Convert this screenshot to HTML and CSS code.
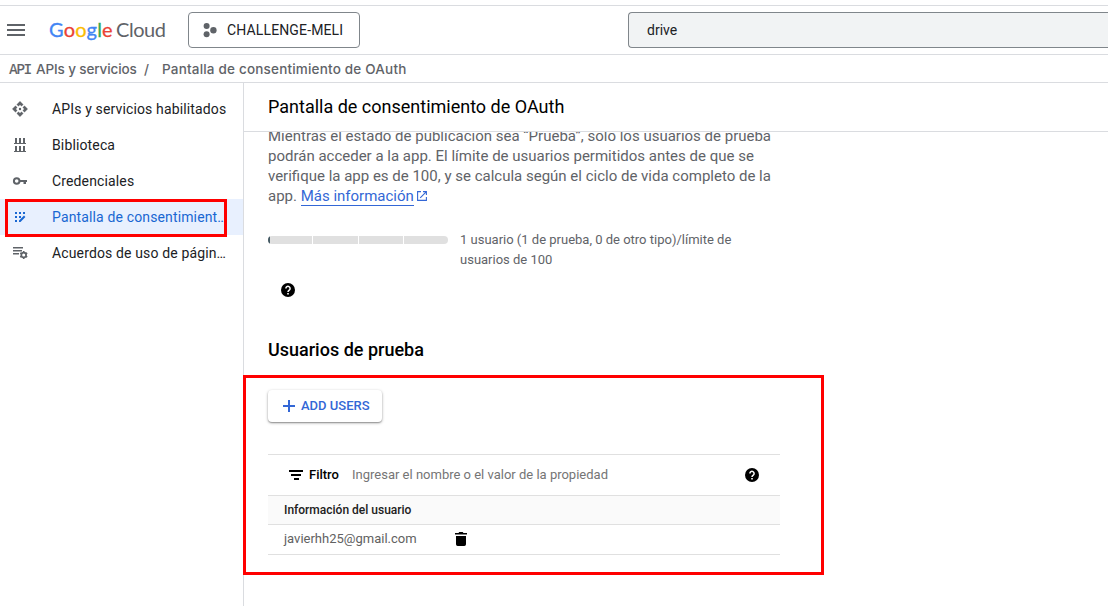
FILE: index.html
```html
<!DOCTYPE html>
<html lang="es">
<head>
<meta charset="utf-8">
<title>Pantalla de consentimiento de OAuth</title>
<link rel="stylesheet" href="styles.css">
</head>
<body>
<header class="topbar">
  <svg class="menu" width="18" height="12" viewBox="0 0 18 12"><path d="M0 0h18v2H0zM0 5h18v2H0zM0 10h18v2H0z" fill="#5f6368"/></svg>
  <div class="logo"><span class="google"><i class="b">G</i><i class="r">o</i><i class="y">o</i><i class="b">g</i><i class="g">l</i><i class="r">e</i></span><span class="cloud">Cloud</span></div>
  <button class="project">
    <svg width="14" height="15" viewBox="0 0 14 15" fill="#5f6368"><circle cx="3.6" cy="3.1" r="3"/><circle cx="10.4" cy="7.2" r="3.2"/><circle cx="3.6" cy="11.3" r="3"/></svg>
    <span>CHALLENGE-MELI</span>
  </button>
  <div class="search">drive</div>
</header>
<nav class="crumbs"><span class="api">API</span><span class="crumb one">APIs y servicios</span><span class="slash">/</span><span class="crumb two">Pantalla de consentimiento de OAuth</span></nav>
<div class="layout">
  <aside class="side">
    <a class="item"><svg width="16" height="16" viewBox="0 0 16 16" fill="#5f6368"><path d="M8 .3l3.200 3.200-1.600 1.700L8 3.800 6.400 5.200 4.800 3.500zM15.700 8l-3.200 3.200-1.700-1.600L12.200 8l-1.400-1.600 1.700-1.600zM8 15.700l-3.200-3.200 1.600-1.700L8 12.200l1.600-1.400 1.600 1.700zM.3 8l3.200-3.200 1.700 1.600L3.800 8l1.400 1.600-1.700 1.600z" stroke="#5f6368" stroke-width=".3" stroke-linejoin="round"/><circle cx="8" cy="8" r="1.200"/></svg><span>APIs y servicios habilitados</span></a>
    <a class="item"><svg width="16" height="16" viewBox="0 0 16 16" fill="#5f6368"><path d="M2 6h12v1H2zM3 1h2v5H3zM7 1h2v5H7zM11 1h2v5h-2zM2 14h12v1H2zM3 9h2v5H3zM7 9h2v5H7zM11 9h2v5h-2z"/></svg><span>Biblioteca</span></a>
    <a class="item"><svg width="16" height="16" viewBox="0 0 16 16"><circle cx="4.700" cy="8" r="2.800" fill="none" stroke="#5f6368" stroke-width="2"/><path d="M7.500 7H15v2h-1v2h-2.500V9h-4z" fill="#5f6368"/></svg><span>Credenciales</span></a>
    <a class="item active"><svg width="16" height="16" viewBox="0 0 16 16" fill="#1967d2"><path d="M3 3h2v2H3zM7 3h2v2H7zM11 3h2v2h-2zM3 7h2v2H3zM7 7h2v2H7zM3 11h2v2H3zM7 13v-1.500l5-4.900 1.400 1.400L8.500 13z"/></svg><span>Pantalla de consentimient…</span></a>
    <a class="item"><svg width="16" height="16" viewBox="0 0 16 16"><path d="M1 2h10v1.500H1zM1 5h9v1.500H1zM1 8h6v1.500H1z" fill="#5f6368"/><circle cx="11.700" cy="10" r="2.400" fill="none" stroke="#5f6368" stroke-width="1.700"/><path d="M11.700 6v1.600M11.700 12.400V14M8.200 8l1.400.8M13.800 11.200l1.400.8M8.200 12l1.400-.8M13.800 8.800l1.400-.8" stroke="#5f6368" stroke-width="1.600"/></svg><span>Acuerdos de uso de págin…</span></a>
    <div class="mark mark-side"></div>
  </aside>
  <main class="main">
    <h1>Pantalla de consentimiento de OAuth</h1>
    <div class="scroll">
      <p class="intro">Mientras el estado de publicación sea “Prueba”, sólo los usuarios de prueba<br>podrán acceder a la app. El límite de usuarios permitidos antes de que se<br>verifique la app es de 100, y se calcula según el ciclo de vida completo de la<br>app. <a class="more">Más información</a><svg class="ext" width="10" height="10" viewBox="0 0 10 10" fill="none" stroke="#3367d6" stroke-width="1.100"><path d="M4 .6H.6v8.800h8.800V6M6 .6h3.400V4M9.400.6L3.200 6.800"/></svg></p>
      <div class="quota">
        <div class="meter"><i></i><i></i><i></i><i></i></div>
        <p>1 usuario (1 de prueba, 0 de otro tipo)/límite de<br>usuarios de 100</p>
      </div>
      <svg class="help" width="14" height="14" viewBox="0 0 14 14"><circle cx="7" cy="7" r="7"/><path d="M4.900 5.500a2.100 2.100 0 1 1 3.300 1.700C7.400 7.800 7 8 7 9" fill="none" stroke="#fff" stroke-width="1.500"/><path d="M6.200 10h1.600v1.600H6.200z" fill="#fff"/></svg>
      <h2>Usuarios de prueba</h2>
      <section class="users">
        <button class="add"><svg width="12" height="12" viewBox="0 0 12 12"><path d="M5 0h2v5h5v2H7v5H5V7H0V5h5z" fill="#3367d6"/></svg><span>ADD USERS</span></button>
        <div class="table">
          <div class="filter"><svg width="14" height="10" viewBox="0 0 14 10"><path d="M0 0h14v2H0zM2 4h10v2H2zM5 8h5v2H5z"/></svg><b>Filtro</b><span>Ingresar el nombre o el valor de la propiedad</span>
            <svg class="tip" width="14" height="14" viewBox="0 0 14 14"><circle cx="7" cy="7" r="7"/><path d="M4.900 5.500a2.100 2.100 0 1 1 3.300 1.700C7.400 7.800 7 8 7 9" fill="none" stroke="#fff" stroke-width="1.500"/><path d="M6.200 10h1.600v1.600H6.200z" fill="#fff"/></svg></div>
          <div class="th">Información del usuario</div>
          <div class="td"><span>javierhh25@gmail.com</span><svg width="12" height="14" viewBox="0 0 12 14"><path d="M0 1h3.500l.8-1h3.400l.8 1H12v1.500H0zM1 4h10v8.300Q11 14 9.300 14H2.700Q1 14 1 12.300z"/></svg></div>
        </div>
      </section>
    </div>
    <div class="mark mark-users"></div>
  </main>
</div>
</body>
</html>
```
FILE: styles.css
```css
* { box-sizing: border-box; }
body { margin: 0; padding-top: 5px; height: 606px; overflow: hidden; background: #fff; font-family: Roboto, sans-serif; font-size: 14px; color: #202124; display: flex; flex-direction: column; }
h1, h2, p { margin: 0; }
i { font-style: normal; }
svg { display: block; flex: none; }
button { font-family: inherit; background: #fff; }
.topbar { height: 50px; flex: none; border-top: 1px solid #dadce0; border-bottom: 1px solid #dadce0; display: flex; align-items: center; padding-left: 7px; }
.logo { margin: -2px 0 0 24px; width: 139px; display: flex; gap: 5px; font: 20px/24px Lato, sans-serif; white-space: nowrap; }
.google { width: 62px; letter-spacing: .15px; -webkit-text-stroke: .3px; }
.cloud { color: #5f6368; letter-spacing: -.45px; }
.b { color: #4285f4; } .r { color: #ea4335; } .y { color: #fbbc04; } .g { color: #34a853; }
.project { width: 172px; height: 36px; border: 1px solid #80868b; border-radius: 4px; padding: 0 0 0 14px; display: flex; align-items: center; gap: 10px; font-size: 14px; letter-spacing: .14px; color: #202124; white-space: nowrap; }
.search { margin-left: 268px; flex: 1; height: 36px; line-height: 34px; background: #f1f3f4; border: 1px solid #80868b; border-right: 0; border-radius: 4px 0 0 4px; padding-left: 18px; }
.crumbs { height: 28px; flex: none; border-bottom: 1px solid #dadce0; display: flex; align-items: center; font: 500 13.5px/26px Inter, sans-serif; color: #5f6368; white-space: nowrap; }
.api { font: 14.5px/26px "DejaVu Sans Mono", monospace; letter-spacing: -1.5px; margin-left: 9px; width: 27px; -webkit-text-stroke: .2px; }
.one { width: 108px; letter-spacing: -.12px; }
.slash { width: 18px; }
.two { letter-spacing: .19px; }
.layout { flex: 1; min-height: 0; display: flex; }
.side { position: relative; width: 244px; flex: none; border-right: 1px solid #dadce0; padding-top: 8px; letter-spacing: .14px; }
.item { display: flex; align-items: center; height: 36px; padding-left: 12px; gap: 24px; white-space: nowrap; }
.active { background: #e8f0fe; color: #1967d2; }
.mark { position: absolute; border: 3px solid #f00; }
.mark-side { left: 5px; top: 115.5px; width: 222px; height: 38px; }
.main { position: relative; flex: 1; min-width: 0; display: flex; flex-direction: column; }
h1 { height: 49px; flex: none; border-bottom: 1px solid #dadce0; padding-left: 24px; font-size: 18px; font-weight: 400; line-height: 48px; color: #000; }
.scroll { flex: 1; min-height: 0; overflow: hidden; padding-left: 24px; }
.intro { margin-top: -6px; font-size: 15px; line-height: 20px; color: #5f6368; white-space: nowrap; }
.more { color: #3367d6; border-bottom: 1px solid #3367d6; }
.ext { display: inline-block; margin-left: 3px; }
.quota { display: flex; margin-top: 24px; font-size: 13px; line-height: 20px; color: #5f6368; white-space: nowrap; }
.meter { width: 180px; height: 8px; margin: 6px 12px 0 0; display: grid; grid-template-columns: 44px 45px 44px 44px; gap: 1px; border-radius: 4px; overflow: hidden; }
.meter i { background: #e0e0e0; }
.meter i:first-child { border-left: 2px solid #455a64; }
.help { margin: 13px 0 0 13px; }
h2 { margin-top: 41px; font-size: 18px; font-weight: 500; line-height: 24px; color: #000; }
.users { padding-top: 28px; }
.add { width: 114px; height: 32px; border: 0; border-radius: 4px; box-shadow: 0 1px 3px rgba(0,0,0,.35), 0 1px 1px rgba(0,0,0,.2); padding: 0 0 0 15px; display: flex; align-items: center; gap: 6px; color: #3367d6; font-size: 13px; line-height: 16px; font-weight: 500; white-space: nowrap; }
.table { width: 512px; margin-top: 32px; border-top: 1px solid #e0e0e0; font-size: 13px; white-space: nowrap; }
.filter { height: 41px; display: flex; align-items: center; padding: 0 21px; border-bottom: 1px solid #e0e0e0; line-height: 16px; color: #757575; }
.filter b { width: 43px; margin-left: 6px; font-weight: 500; color: #000; }
.filter b, .filter span { padding-bottom: 1px; }
.tip { margin-left: auto; }
.th { height: 29px; line-height: 28px; padding-left: 16px; background: #fafafa; border-bottom: 1px solid #e0e0e0; font-size: 12px; font-weight: 500; color: #212121; }
.td { height: 30px; display: flex; align-items: center; padding: 0 0 2px 16px; border-bottom: 1px solid #e0e0e0; color: #616161; }
.td span { width: 171px; }
.mark-users { left: -1px; top: 292px; width: 581px; height: 200px; }
```
